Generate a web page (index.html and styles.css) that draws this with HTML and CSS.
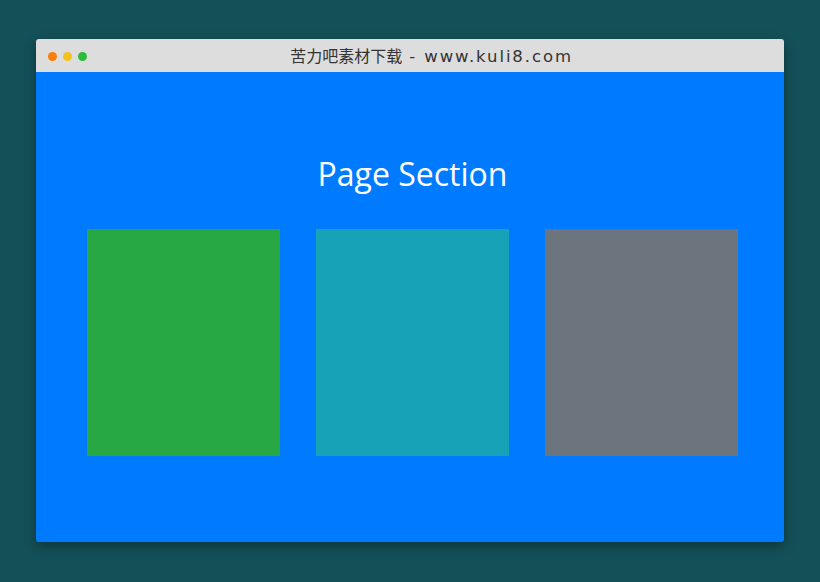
FILE: index.html
```html
<!DOCTYPE html>
<html lang="zh-CN">
<head>
<meta charset="utf-8">
<title>Page Section</title>
<link rel="stylesheet" href="styles.css">
</head>
<body>
<div class="window">
  <div class="titlebar">
    <div class="dots">
      <span class="dot dot-orange"></span>
      <span class="dot dot-yellow"></span>
      <span class="dot dot-green"></span>
    </div>
    <div class="title"><span class="title-cn">苦力吧素材下载</span><span class="title-en"> - www.kuli8.com</span></div>
  </div>
  <div class="content">
    <h1 class="heading">Page Section</h1>
    <div class="boxes">
      <div class="box box-green"></div>
      <div class="box box-teal"></div>
      <div class="box box-gray"></div>
    </div>
  </div>
</div>
</body>
</html>
```
FILE: styles.css
```css
html, body {
  margin: 0;
  padding: 0;
}
body {
  background: #145058;
  width: 820px;
  height: 582px;
  overflow: hidden;
  padding-top: 39px;
  box-sizing: border-box;
}
.window {
  margin-left: 36px;
  width: 748px;
  height: 503px;
  border-radius: 3px;
  overflow: hidden;
  box-shadow: 0 4px 12px rgba(0, 0, 0, 0.35);
  display: flex;
  flex-direction: column;
}
.titlebar {
  height: 33px;
  background: #dddddd;
  display: flex;
  align-items: center;
  flex-shrink: 0;
}
.dots {
  display: flex;
  gap: 6px;
  padding-left: 12px;
  padding-top: 1px;
}
.dot {
  width: 9px;
  height: 9px;
  border-radius: 50%;
  display: block;
}
.dot-orange { background: #f97f0b; }
.dot-yellow { background: #f2c21c; }
.dot-green { background: #2fbb3a; }
.title {
  flex: 1;
  text-align: center;
  padding-right: 8px;
  font-family: "Noto Sans CJK SC", "Noto Sans", sans-serif;
  font-size: 16px;
  color: #333333;
  line-height: 33px;
  white-space: pre;
}
.title-en {
  font-family: "DejaVu Sans", "Noto Sans CJK SC", sans-serif;
  font-size: 16.5px;
  letter-spacing: 1.9px;
}
.content {
  flex: 1;
  background: #007bff;
  padding: 83px 46px 0 51px;
}
.heading {
  margin: 0 0 36px;
  text-align: center;
  color: #ffffff;
  font-family: "Open Sans", "Noto Sans", sans-serif;
  font-weight: 400;
  font-size: 32px;
  line-height: 38px;
}
.boxes {
  display: grid;
  grid-template-columns: repeat(3, 1fr);
  gap: 36px;
}
.box {
  height: 227px;
}
.box-green { background: #28a745; }
.box-teal { background: #17a2b8; }
.box-gray { background: #6c757d; }
```
